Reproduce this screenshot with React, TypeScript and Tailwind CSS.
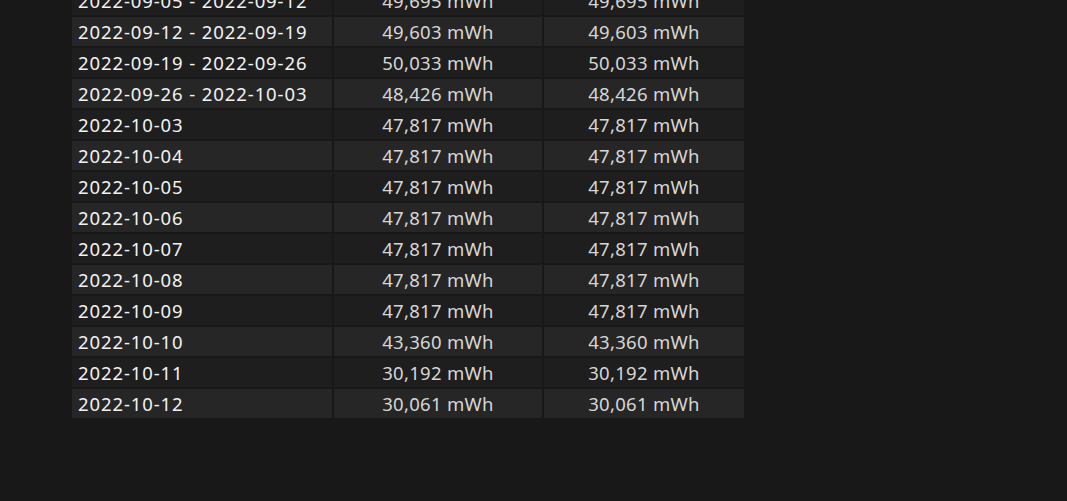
const rows: [string, string][] = [
  ['2022-09-05 - 2022-09-12', '49,695 mWh'],
  ['2022-09-12 - 2022-09-19', '49,603 mWh'],
  ['2022-09-19 - 2022-09-26', '50,033 mWh'],
  ['2022-09-26 - 2022-10-03', '48,426 mWh'],
  ['2022-10-03', '47,817 mWh'],
  ['2022-10-04', '47,817 mWh'],
  ['2022-10-05', '47,817 mWh'],
  ['2022-10-06', '47,817 mWh'],
  ['2022-10-07', '47,817 mWh'],
  ['2022-10-08', '47,817 mWh'],
  ['2022-10-09', '47,817 mWh'],
  ['2022-10-10', '43,360 mWh'],
  ['2022-10-11', '30,192 mWh'],
  ['2022-10-12', '30,061 mWh'],
];

export default function App() {
  return (
    <div className="w-[1067px] h-[501px] overflow-hidden bg-[#181818] font-['Open_Sans','Noto_Sans',sans-serif]">
      <div className="ml-[72px] mt-[-14px] w-[672px] flex flex-col gap-[2px]">
        {rows.map(([d, v], i) => (
          <div
            key={i}
            className={`grid grid-cols-[260px_208px_200px] gap-[2px] h-[29px] text-[18.5px] leading-[29px] ${
              i % 2 === 0 ? 'bg-[#1e1e1e]' : 'bg-[#262626]'
            }`}
          >
            <div className="pl-[6px] text-[#f2f2f2] tracking-[0.9px]">{d}</div>
            <div className="text-center text-[#d6d6d6] tracking-[0.3px] shadow-[-2px_0_0_#181818]">{v}</div>
            <div className="text-center text-[#d6d6d6] tracking-[0.3px] shadow-[-2px_0_0_#181818]">{v}</div>
          </div>
        ))}
      </div>
    </div>
  );
}
